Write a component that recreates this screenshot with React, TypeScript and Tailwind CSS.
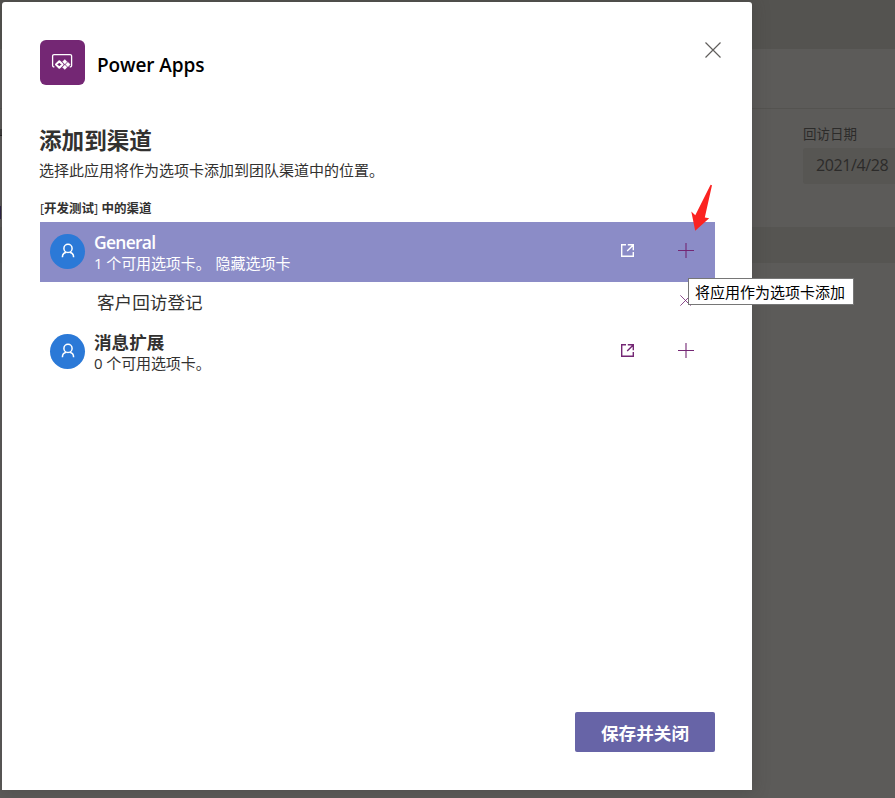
import React from "react";

const FONT = "font-['Open_Sans','Noto_Sans_CJK_SC',sans-serif]";

function PowerAppsLogo() {
  return (
    <div className="flex h-[45px] w-[45px] items-start rounded-[6px] bg-[#742774] pt-[13px] pl-[11px]">
      <svg width="22" height="18" viewBox="0 0 22 18" fill="none">
        <path d="M3.4 13.9H3a1.4 1.4 0 0 1-1.4-1.4V3A1.4 1.4 0 0 1 3 1.6h16.2A1.4 1.4 0 0 1 20.6 3v9.5a1.4 1.4 0 0 1-1.4 1.4h-.5" stroke="#fff" strokeWidth="1.3" />
        <path d="M8.3 8.2l3.3 3.3-3.3 3.3L5 11.5z" stroke="#fff" strokeWidth="2" strokeLinejoin="round" />
        <path d="M13.8 6.6l2.2 2.2-2.2 2.2-2.2-2.2zM16.9 9.3l2.2 2.2-2.2 2.2-2.2-2.2zM13.8 12l2.2 2.2-2.2 2.2-2.2-2.2z" fill="#fff" stroke="#fff" strokeWidth=".5" strokeLinejoin="round" />
      </svg>
    </div>
  );
}

function Avatar() {
  return (
    <div className="mb-[2px] flex h-[35px] w-[35px] shrink-0 items-center justify-center rounded-full bg-[#2b79d7] pb-px">
      <svg width="14" height="15" viewBox="0 0 14 15" fill="none" stroke="#fff" strokeWidth="1.5">
        <circle cx="7" cy="5.4" r="4.1" />
        <path d="M1.4 14.2c0-2.7 1.6-4.5 4-4.9M12.6 14.2c0-2.7-1.6-4.5-4-4.9" />
      </svg>
    </div>
  );
}

function OpenIcon({ className }: { className: string }) {
  return (
    <svg width="13" height="13" viewBox="0 0 13 13" fill="none" stroke="currentColor" strokeWidth="1.4" className={className}>
      <path d="M5 .7H.7v11.6h11.6V8M6.8.7h5.5v5.5M12.2.9L6.2 6.9" />
    </svg>
  );
}

function PlusIcon() {
  return (
    <svg width="16" height="16" viewBox="0 0 16 16" fill="none" stroke="#742774">
      <path d="M0 8.5h16" strokeWidth="1" />
      <path d="M8 1v15" strokeWidth="1.1" />
    </svg>
  );
}

function CrossIcon({ size, className }: { size: number; className: string }) {
  return (
    <svg width={size} height={size} viewBox="0 0 16 16" fill="none" stroke="currentColor" className={className}>
      <path d="M.5.5l15 15M15.5.5l-15 15" strokeWidth="1.2" />
    </svg>
  );
}

function RowActions({ openClass }: { openClass: string }) {
  return (
    <div className="ml-auto flex items-center pr-[21px] pb-[4px]">
      <OpenIcon className={openClass} />
      <span className="w-11" />
      <PlusIcon />
    </div>
  );
}

function Backdrop() {
  return (
    <div className="flex h-full flex-col">
      <div className="h-[49px] bg-[#545350]" />
      <div className="h-[60px] border-b border-[#545350]" />
      <div className="h-[118px] pt-[15px] pl-[803px]">
        <div className="h-[24px] text-[13.5px] leading-[20px] text-[#2c2b2a]">回访日期</div>
        <div className="h-[36px] rounded-l-[3px] bg-[#575653] pl-[13px] text-[16px] leading-[35px] tracking-[-0.4px] text-[#2c2b2a]">2021/4/28</div>
      </div>
      <div className="h-[36px] bg-[#565552]" />
    </div>
  );
}

export default function App() {
  return (
    <div className={`relative h-[798px] w-[895px] overflow-hidden whitespace-nowrap bg-[#5c5b59] ${FONT}`}>
      <Backdrop />
      <div className="absolute top-[129px] left-0 h-[7px] w-[2px] border-b border-[#242323] bg-[#3d3c3b]" />
      <div className="absolute top-[206px] left-0 h-[13px] w-px bg-[#2b2347]" />
      <main className="absolute top-[2px] left-[2px] flex h-[788px] w-[750px] flex-col rounded-t-[3px] bg-white pr-[37px] pl-[38px] shadow-[0_0_16px_2px_rgba(50,48,48,0.25)]">
        <header className="flex h-[83px] pt-[38px]">
          <PowerAppsLogo />
          <h1 className="ml-3 pt-[11px] text-[19px] leading-[28px] font-semibold tracking-[-0.1px] text-black">Power Apps</h1>
          <CrossIcon size={16} className="mt-[2px] mr-[-6px] ml-auto text-[#605e5c]" />
        </header>
        <h2 className="mt-[40px] -ml-px h-[33px] text-[22.6px] leading-[32px] font-bold text-[#323130]">添加到渠道</h2>
        <p className="mt-[1px] -ml-px h-[22px] text-[15px] leading-[22px] text-[#323130]">选择此应用将作为选项卡添加到团队渠道中的位置。</p>
        <p className="mt-[18px] h-[23px] text-[12.5px] leading-[20px] font-bold text-[#323130]">
          <span className="font-normal">[</span>开发测试<span className="font-normal">]</span> 中的渠道
        </p>
        <section className="flex h-[60px] items-center bg-[#8b8cc7] pl-[10px] text-white">
          <Avatar />
          <div className="ml-[9px]">
            <div className="h-[22px] text-[17.5px] leading-[22px] font-semibold tracking-[-0.75px]">General</div>
            <div className="h-[21px] text-[15px] leading-[20px]">
              <span className="tracking-[-0.1px]">1 个可用选项卡。</span>
              <span className="ml-[5px]">隐藏选项卡</span>
            </div>
          </div>
          <RowActions openClass="text-white" />
        </section>
        <div className="flex h-[40px] items-center pr-[24px] pl-[57px] text-[17.6px] text-[#323130]">
          <span>客户回访登记</span>
          <CrossIcon size={11} className="mb-[3px] ml-auto text-[#742774]" />
        </div>
        <section className="flex h-[60px] items-center pl-[10px] text-[#323130]">
          <Avatar />
          <div className="ml-[9px] pt-px">
            <div className="h-[22px] text-[17.6px] leading-[23px] font-bold">消息扩展</div>
            <div className="h-[21px] text-[15px] leading-[21px] tracking-[-0.1px]">0 个可用选项卡。</div>
          </div>
          <RowActions openClass="text-[#742774]" />
        </section>
        <button className="mt-auto mb-[38px] h-[40px] w-[140px] self-end rounded-[2px] bg-[#6764a7] pt-[2px] text-[17.6px] leading-[38px] font-bold text-white">保存并关闭</button>
      </main>
      <div className="absolute top-[278px] left-[688px] h-[27px] w-[166px] border border-[#767676] bg-white pl-[6px] text-[15px] leading-[26px] text-black">将应用作为选项卡添加</div>
      <svg className="absolute top-[184px] left-[690px]" width="24" height="48" viewBox="0 0 24 48">
        <path d="M20.6.8l1.4.4-7.2 32.3 4.4.7L5.2 46.8 1.3 27.4l4 3.8z" fill="#fb2321" />
      </svg>
    </div>
  );
}
